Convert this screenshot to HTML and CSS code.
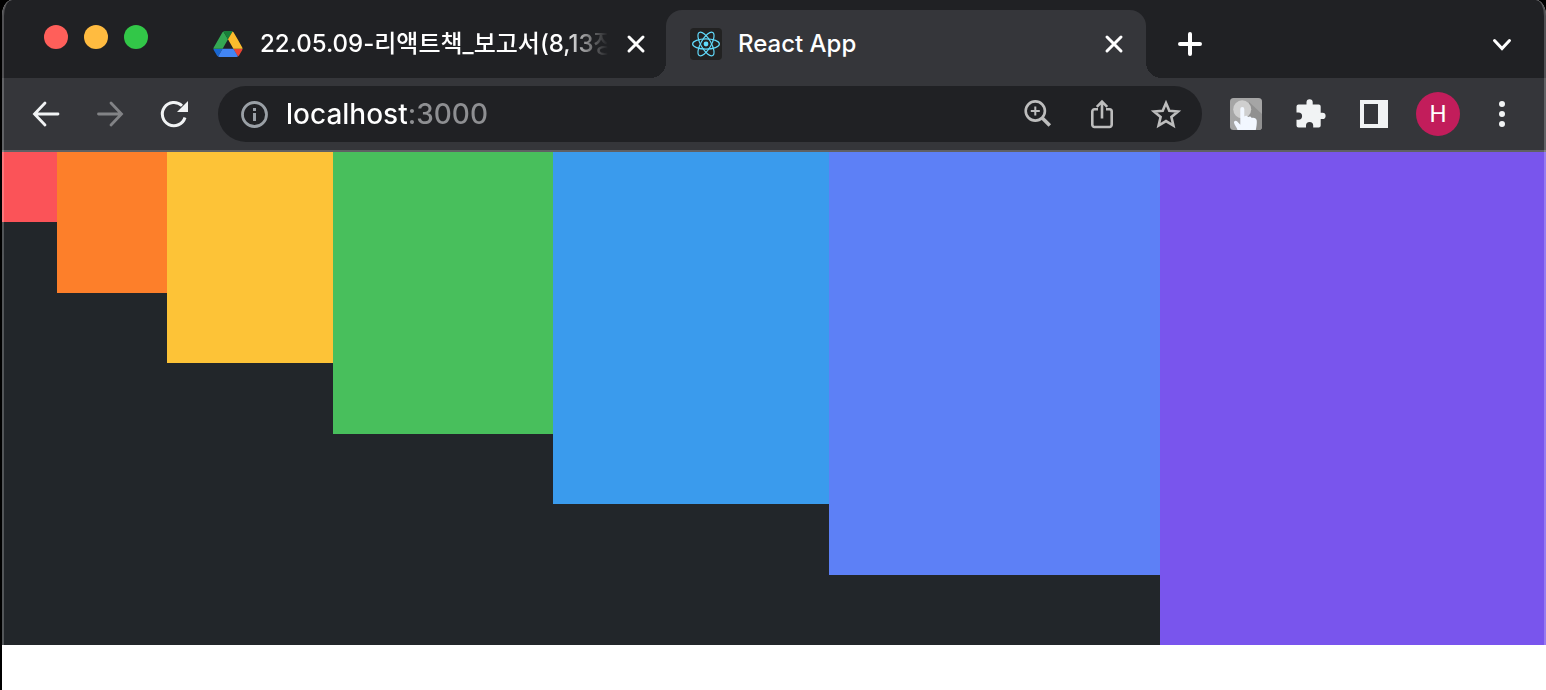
FILE: index.html
```html
<!DOCTYPE html>
<html lang="ko">
<head>
<meta charset="utf-8">
<meta name="viewport" content="width=device-width, initial-scale=1">
<title>React App</title>
<link rel="stylesheet" href="styles.css">
</head>
<body>
<div class="window">
  <header class="tab-strip">
    <div class="lights">
      <button class="light light-close" aria-label="Close window"></button>
      <button class="light light-min" aria-label="Minimize window"></button>
      <button class="light light-max" aria-label="Zoom window"></button>
    </div>
    <div class="tab">
      <span class="favicon">
        <svg width="30" height="26" viewBox="0 0 87.3 78" aria-hidden="true">
          <path fill="#1967d2" d="m6.6 66.85 3.85 6.65c.8 1.4 1.95 2.5 3.3 3.3l13.75-23.8h-27.5c0 1.55.4 3.1 1.2 4.5z"/>
          <path fill="#34a853" d="m43.65 25-13.75-23.8c-1.35.8-2.5 1.9-3.3 3.3l-25.4 44a9.06 9.06 0 0 0 -1.2 4.5h27.5z"/>
          <path fill="#ea4335" d="m73.55 76.8c1.35-.8 2.5-1.9 3.3-3.3l1.6-2.75 7.65-13.25c.8-1.4 1.2-2.95 1.2-4.5h-27.5l5.85 11.5z"/>
          <path fill="#188038" d="m43.65 25 13.75-23.8c-1.35-.8-2.9-1.2-4.5-1.2h-18.5c-1.6 0-3.15.45-4.5 1.2z"/>
          <path fill="#4285f4" d="m59.8 53h-32.3l-13.75 23.8c1.35.8 2.9 1.2 4.5 1.2h50.8c1.6 0 3.15-.45 4.5-1.2z"/>
          <path fill="#fbbc2d" d="m73.4 26.5-12.7-22c-.8-1.4-1.95-2.5-3.3-3.3l-13.75 23.8 16.15 28h27.45c0-1.55-.4-3.1-1.2-4.5z"/>
        </svg>
      </span>
      <span class="tab-title tab-title-fade">22.05.09-리액트책_보고서(8,13장</span>
      <button class="tab-close" aria-label="Close tab">
        <svg width="24" height="24" viewBox="0 0 24 24" aria-hidden="true"><path d="M5 5l14 14M19 5L5 19"/></svg>
      </button>
    </div>
    <div class="tab tab-active">
      <span class="favicon favicon-react">
        <svg width="30" height="28" viewBox="-15 -14 30 28" aria-hidden="true">
          <circle r="2.4" fill="#61dafb"/>
          <g fill="none" stroke="#61dafb" stroke-width="1.2">
            <ellipse rx="13.4" ry="5.1"/>
            <ellipse rx="13.4" ry="5.1" transform="rotate(60)"/>
            <ellipse rx="13.4" ry="5.1" transform="rotate(120)"/>
          </g>
        </svg>
      </span>
      <span class="tab-title">React App</span>
      <button class="tab-close" aria-label="Close tab">
        <svg width="24" height="24" viewBox="0 0 24 24" aria-hidden="true"><path d="M5 5l14 14M19 5L5 19"/></svg>
      </button>
    </div>
    <button class="new-tab" aria-label="New tab">
      <svg width="32" height="32" viewBox="0 0 32 32" aria-hidden="true"><path d="M16 6v20M6 16h20"/></svg>
    </button>
    <button class="tab-search" aria-label="Search tabs">
      <svg width="32" height="32" viewBox="0 0 32 32" aria-hidden="true"><path d="M8.500 12.500L16 20.500L23.500 12.500"/></svg>
    </button>
  </header>

  <nav class="toolbar" aria-label="Browser toolbar">
    <button class="tool" aria-label="Back">
      <svg width="32" height="32" viewBox="0 0 32 32" fill="none" stroke="#f1f3f4" stroke-width="2.800" stroke-linecap="round" stroke-linejoin="miter" aria-hidden="true"><path d="M15 5L4.500 16L15 27M5 16h23"/></svg>
    </button>
    <button class="tool" aria-label="Forward">
      <svg width="32" height="32" viewBox="0 0 32 32" fill="none" stroke="#828386" stroke-width="2.800" stroke-linecap="round" aria-hidden="true"><path d="M17 5L27.500 16L17 27M4.500 16h22"/></svg>
    </button>
    <button class="tool" aria-label="Reload">
      <svg width="32" height="32" viewBox="0 0 32 32" aria-hidden="true"><path d="M27 19.500A11.600 11.600 0 1 1 24 7.800" fill="none" stroke="#f1f3f4" stroke-width="3"/><path d="M30 3v11H19z" fill="#f1f3f4"/></svg>
    </button>
    <div class="omnibox">
      <button class="site-info" aria-label="Site information">
        <svg width="32" height="32" viewBox="0 0 32 32" aria-hidden="true"><circle cx="16.500" cy="16.500" r="12" fill="none" stroke="#9aa0a6" stroke-width="2.800"/><path d="M15 10h3v3h-3zM15 15h3v8h-3z" fill="#9aa0a6"/></svg>
      </button>
      <input class="address" type="text" aria-label="Address" value="localhost:3000" spellcheck="false">
      <button class="tool" aria-label="Zoom">
        <svg width="32" height="32" viewBox="0 0 32 32" fill="none" stroke="#bdbdbd" aria-hidden="true"><circle cx="13.300" cy="13" r="9.600" stroke-width="2.600"/><path d="M13.300 8.500v9M8.800 13h9" stroke-width="2"/><path d="M20 19.800L27.800 27.500" stroke-width="3.600"/></svg>
      </button>
      <button class="tool" aria-label="Share">
        <svg width="32" height="32" viewBox="0 0 32 32" fill="none" stroke="#bdbdbd" stroke-width="2.600" aria-hidden="true"><path d="M12 11.300H8.500a2.200 2.200 0 0 0-2.200 2.200v13.300A2.200 2.200 0 0 0 8.500 29h15a2.200 2.200 0 0 0 2.200-2.200V13.500a2.200 2.200 0 0 0-2.200-2.200H20"/><path d="M16 20.500V4.500M10.800 8.800L16 3.600l5.200 5.200"/></svg>
      </button>
      <button class="tool" aria-label="Bookmark this tab">
        <svg width="32" height="32" viewBox="0 0 32 32" aria-hidden="true"><path d="M16 5l3.300 7.800 8.700.7-6.600 5.600 2 8.400L16 23.100l-7.400 4.400 2-8.400L4 13.500l8.700-.7z" fill="none" stroke="#bdbdbd" stroke-width="2.600"/></svg>
      </button>
    </div>
    <button class="tool" aria-label="Click extension">
      <svg width="32" height="32" viewBox="0 0 32 32" aria-hidden="true">
        <rect width="32" height="32" rx="3.500" fill="#a5a5a5"/>
        <path d="M19 4l13 12v12.500a3.500 3.500 0 0 1-3.500 3.500H13z" fill="#909090"/>
        <circle cx="12.200" cy="11.300" r="9" fill="#cfcfcf"/>
        <path d="M10.300 11a2 2 0 0 1 4 0v7.500c1-1.400 3.400-1 3.700.6 1.300-1.200 3.400-.7 3.700 1 1.800-1.100 4.900.2 5.100 2.700.1 3-.3 6-1 9.200H7.500c-.8-2.800-3-5-3.500-7.200-.3-2 1.800-2.800 3-1.500l3.300 3.400z" fill="#f2f7ff"/>
      </svg>
    </button>
    <button class="tool" aria-label="Extensions">
      <svg width="32" height="32" viewBox="0 0 32 32" aria-hidden="true"><path fill="#f1f3f4" d="M4.500 6.500h8V4.300a3 3 0 0 1 6.200 0v2.200h6a2 2 0 0 1 2 2v6.300h1.800a3.100 3.100 0 0 1 0 6.200h-1.800v6.500a2 2 0 0 1-2 2h-5.500v-2a3.600 3.600 0 0 0-7.200 0v2H4.500a2 2 0 0 1-2-2v-5.800h2a3.600 3.600 0 0 0 0-7.200h-2V8.500a2 2 0 0 1 2-2z"/></svg>
    </button>
    <button class="tool" aria-label="Side panel">
      <svg width="32" height="32" viewBox="0 0 32 32" aria-hidden="true"><path fill="#f1f3f4" fill-rule="evenodd" d="M2 2h28v28H2zM6 6v20h14V6z"/></svg>
    </button>
    <button class="tool" aria-label="Profile"><span class="avatar">H</span></button>
    <button class="tool" aria-label="Menu">
      <svg width="32" height="32" viewBox="0 0 32 32" fill="#f1f3f4" aria-hidden="true"><circle cx="16" cy="6" r="3"/><circle cx="16" cy="16" r="3"/><circle cx="16" cy="26" r="3"/></svg>
    </button>
  </nav>

  <main class="page">
    <div class="rainbow">
      <div class="bar bar-red"></div>
      <div class="bar bar-orange"></div>
      <div class="bar bar-yellow"></div>
      <div class="bar bar-green"></div>
      <div class="bar bar-blue"></div>
      <div class="bar bar-indigo"></div>
      <div class="bar bar-violet"></div>
    </div>
  </main>
</div>
</body>
</html>
```
FILE: styles.css
```css
* {
  box-sizing: border-box;
}

body {
  margin: 0;
  background: #000;
  font-family: Inter, "Noto Sans CJK KR", sans-serif;
}

button {
  display: flex;
  align-items: center;
  justify-content: center;
  flex: none;
  margin: 0;
  padding: 0;
  border: 0;
  background: none;
  font: inherit;
}

svg {
  display: block;
}

.window {
  position: relative;
  display: flex;
  flex-direction: column;
  min-height: 100vh;
  margin-left: 2px;
  overflow: hidden;
  border-radius: 10px 10px 0 0 / 16px 16px 0 0;
  background: #fff;
}

/* Light rim around the window edge */
.window::after {
  content: "";
  position: absolute;
  inset: -2px 0 0;
  border: solid rgba(255, 255, 255, 0.22);
  border-width: 2px 2px 0;
  border-radius: 10px 10px 0 0 / 18px 18px 0 0;
  pointer-events: none;
}

.tab-strip {
  display: flex;
  align-items: flex-end;
  height: 78px;
  padding-right: 28px;
  background: #202124;
}

.lights {
  display: flex;
  flex: none;
  gap: 16px;
  align-self: center;
  width: 186px;
  padding: 0 0 4px 42px;
}

.light {
  width: 24px;
  height: 24px;
  border-radius: 50%;
}

.light-close {
  background: #ff5f5a;
}

.light-min {
  background: #ffbb40;
}

.light-max {
  background: #32c748;
}

.tab {
  position: relative;
  display: flex;
  flex: 0 1 480px;
  align-items: center;
  gap: 16px;
  min-width: 0;
  height: 68px;
  margin-right: -2px;
  padding: 0 20px 0 24px;
  color: #fff;
}

.tab-active {
  margin-right: 0;
  border-radius: 16px 16px 0 0;
  background: #35363a;
}

/* Curved feet where the active tab meets the toolbar */
.tab-active::before,
.tab-active::after {
  content: "";
  position: absolute;
  bottom: 0;
  width: 16px;
  height: 16px;
}

.tab-active::before {
  right: 100%;
  background: radial-gradient(circle at 0 0, transparent 16px, #35363a 16px);
}

.tab-active::after {
  left: 100%;
  background: radial-gradient(circle at 100% 0, transparent 16px, #35363a 16px);
}

.favicon {
  display: flex;
  flex: none;
  align-items: center;
  justify-content: center;
  width: 32px;
  height: 32px;
}

.favicon-react {
  border-radius: 4px;
  background: #222;
}

.tab-title {
  flex: 1;
  min-width: 0;
  overflow: hidden;
  font-size: 24px;
  font-weight: 500;
  line-height: 36px;
  white-space: nowrap;
}

.tab-title-fade {
  -webkit-mask-image: linear-gradient(to left, transparent, #000 44px);
  mask-image: linear-gradient(to left, transparent, #000 44px);
}

.tab-close svg,
.new-tab svg,
.tab-search svg {
  fill: none;
  stroke: #fff;
  stroke-width: 3;
  stroke-linecap: round;
}

.new-tab {
  height: 68px;
  margin-left: 28px;
}

.new-tab svg {
  stroke-width: 4;
}

.tab-search {
  height: 68px;
  margin-left: auto;
}

.toolbar {
  display: flex;
  align-items: center;
  height: 74px;
  padding: 0 12px;
  border-bottom: 2px solid #5f6063;
  background: #35363a;
}

.tool {
  width: 64px;
  height: 56px;
}

.omnibox {
  display: flex;
  flex: 1;
  align-items: center;
  min-width: 0;
  height: 56px;
  margin: 0 12px;
  padding: 0 4px 0 20px;
  border-radius: 28px;
  background: #202124;
}

.address {
  flex: 1;
  min-width: 0;
  height: 40px;
  margin-left: 16px;
  padding: 0;
  border: 0;
  outline: 0;
  background: linear-gradient(to right, #fff 121px, #8e8f92 121px);
  -webkit-background-clip: text;
  background-clip: text;
  color: transparent;
  font: inherit;
  font-size: 28px;
  font-weight: 500;
}

.avatar {
  display: flex;
  align-items: center;
  justify-content: center;
  width: 44px;
  height: 44px;
  border-radius: 50%;
  background: #c21d5b;
  color: #fff;
  font-family: Roboto, sans-serif;
  font-size: 24px;
}

.page {
  display: flex;
  flex: 1;
  flex-direction: column;
  padding-bottom: 45px;
}

.rainbow {
  display: grid;
  flex: 1;
  grid-template-columns: 1fr 2fr 3fr 4fr 5fr 6fr 7fr;
  grid-template-rows: repeat(7, 1fr);
  background: #22262a;
}

.bar {
  grid-row-start: 1;
}

.bar-red {
  grid-row-end: 2;
  background: #fb5358;
}

.bar-orange {
  grid-row-end: 3;
  background: #fd7f2a;
}

.bar-yellow {
  grid-row-end: 4;
  background: #fdc337;
}

.bar-green {
  grid-row-end: 5;
  background: #48bf5c;
}

.bar-blue {
  grid-row-end: 6;
  background: #3a9bed;
}

.bar-indigo {
  grid-row-end: 7;
  background: #5d80f6;
}

.bar-violet {
  grid-row-end: 8;
  background: #7955ed;
}
```
